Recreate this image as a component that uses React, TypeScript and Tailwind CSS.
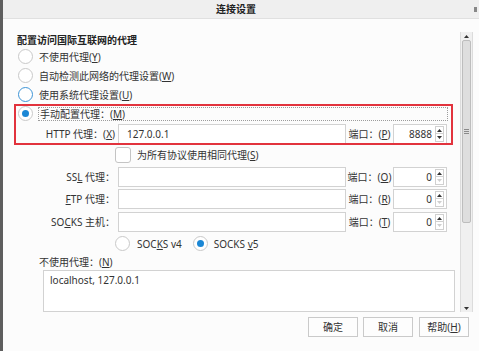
import React from "react";

const FONT = "font-['Noto_Sans','Noto_Sans_CJK_SC',sans-serif]";

function U({ children }: { children: React.ReactNode }) {
  return <span className="underline underline-offset-[1px]">{children}</span>;
}

function Radio({ checked = false, blue = false }: { checked?: boolean; blue?: boolean }) {
  return (
    <span
      className={
        blue
          ? "w-[15px] h-[15px] rounded-full border border-[#3d94d6] bg-white flex items-center justify-center shrink-0"
          : "w-[15px] h-[15px] rounded-full border border-[#c9c9c9] bg-white flex items-center justify-center shrink-0"
      }
    >
      {checked && <span className="w-[7px] h-[7px] rounded-full bg-[#1b87d5]" />}
    </span>
  );
}

function Tri({ up, dark }: { up: boolean; dark: boolean }) {
  return (
    <svg width="5" height="3" viewBox="0 0 5 3">
      <polygon points={up ? "2.5,0 5,3 0,3" : "0,0 5,0 2.5,3"} fill={dark ? "#333" : "#cfcfcf"} />
    </svg>
  );
}

function PortBox({ value, downDark }: { value: string; downDark: boolean }) {
  return (
    <div className="w-[54px] h-[20px] border border-[#d2d2d2] bg-white flex items-center">
      <span className="flex-1 text-right">{value}</span>
      <div className="w-[9px] h-[16px] ml-[3px] mr-[2px] flex flex-col">
        <div className="h-[8px] border border-[#d0d0d0] flex items-center justify-center">
          <Tri up dark />
        </div>
        <div className="h-[8px] border border-t-0 border-[#d0d0d0] flex items-center justify-center">
          <Tri up={false} dark={downDark} />
        </div>
      </div>
    </div>
  );
}

function ProxyRow({
  label,
  value,
  portLabel,
  port,
  downDark,
  mt,
}: {
  label: React.ReactNode;
  value: string;
  portLabel: React.ReactNode;
  port: string;
  downDark: boolean;
  mt: string;
}) {
  return (
    <div className={`flex items-center h-[20px] ${mt}`}>
      <div className="w-[115px] text-right pr-[3px] whitespace-nowrap">{label}</div>
      <div className="w-[228px] h-[20px] border border-[#d2d2d2] bg-white flex items-center pl-[8px]">{value}</div>
      <div className="w-[47px] text-center whitespace-nowrap">{portLabel}</div>
      <PortBox value={port} downDark={downDark} />
    </div>
  );
}

export default function App() {
  return (
    <div className={`w-[479px] h-[351px] flex bg-[#fcfcfc] overflow-hidden relative text-[10px] leading-[12px] text-[#333] ${FONT}`}>
      <div className="w-[3px] bg-[#5e5e5e] shrink-0" />
      <div className="flex-1 flex flex-col">
        {/* title bar */}
        <div className="h-[19px] bg-[#efefef] border-b border-[#e0e0e0] flex items-center justify-center pr-[10px] relative shrink-0">
          <span className="font-bold text-[#222]">连接设置</span>
          <span className="absolute right-[2px] top-[7px] w-[3px] h-[5px] bg-[#888]" />
        </div>

        {/* body */}
        <div className="flex">
          <div className="w-[457px] flex flex-col">
            <div className="mt-[15px] pl-[14px] h-[12px] font-bold text-[#222]">配置访问国际互联网的代理</div>
            <div className="mt-[1px] flex flex-col">
              <div className="h-[19px] flex items-center pl-[15px] gap-[6px]">
                <Radio />
                <span>不使用代理(<U>Y</U>)</span>
              </div>
              <div className="h-[19px] flex items-center pl-[15px] gap-[6px]">
                <Radio />
                <span>自动检测此网络的代理设置(<U>W</U>)</span>
              </div>
              <div className="h-[19px] flex items-center pl-[15px] gap-[6px]">
                <Radio blue />
                <span>使用系统代理设置(<U>U</U>)</span>
              </div>
              <div className="h-[19px] flex items-center pl-[15px]">
                <Radio checked />
                <div className="ml-[5px] w-[410px] h-[14px] border border-dotted border-[#9c9c9c] flex items-center pl-[1px]">
                  手动配置代理：(<U>M</U>)
                </div>
              </div>
            </div>

            <ProxyRow
              mt="mt-[1px]"
              label={<>HTTP 代理：(<U>X</U>)</>}
              value="127.0.0.1"
              portLabel={<>端口：(<U>P</U>)</>}
              port="8888"
              downDark
            />

            <div className="mt-[3px] h-[16px] flex items-center pl-[112px]">
              <span className="w-[16px] h-[16px] rounded-[3px] border border-[#c4c4c4] bg-white shrink-0" />
              <span className="ml-[6px]">为所有协议使用相同代理(<U>S</U>)</span>
            </div>

            <ProxyRow
              mt="mt-[4px]"
              label={<>SS<U>L</U> 代理：</>}
              value=""
              portLabel={<>端口：(<U>O</U>)</>}
              port="0"
              downDark={false}
            />
            <ProxyRow
              mt="mt-[2px]"
              label={<><U>F</U>TP 代理：</>}
              value=""
              portLabel={<>端口：(<U>R</U>)</>}
              port="0"
              downDark={false}
            />
            <ProxyRow
              mt="mt-[3px]"
              label={<>SO<U>C</U>KS 主机：</>}
              value=""
              portLabel={<>端口：(<U>T</U>)</>}
              port="0"
              downDark={false}
            />

            <div className="mt-[4px] h-[15px] flex items-center pl-[112px]">
              <Radio />
              <span className="ml-[7px]">SOC<U>K</U>S v4</span>
              <span className="ml-[11px]"><Radio checked /></span>
              <span className="ml-[6px]">SOCKS <U>v</U>5</span>
            </div>

            <div className="mt-[5px] h-[12px] pl-[36px]">不使用代理：(<U>N</U>)</div>

            <div className="mt-[2px] ml-[40px] w-[412px] h-[42px] border border-[#d2d2d2] bg-white pl-[6px] pt-[3px]">
              localhost, 127.0.0.1
            </div>
          </div>

          {/* scrollbar */}
          <div className="mt-[13px] w-[13px] h-[280px] flex flex-col bg-[#f0f0f0] border-x border-[#dcdcdc]">
            <div className="h-[8px] flex items-center justify-center">
              <Tri up dark />
            </div>
            <div className="h-[183px] mx-[1px] rounded-[2px] border border-[#bdbdbd] bg-[#dedede] flex items-center justify-center">
              <div className="flex flex-col gap-[1px]">
                <span className="w-[5px] h-[1px] bg-[#8a8a8a]" />
                <span className="w-[5px] h-[1px] bg-[#8a8a8a]" />
                <span className="w-[5px] h-[1px] bg-[#8a8a8a]" />
              </div>
            </div>
            <div className="flex-1" />
            <div className="h-[8px] flex items-center justify-center">
              <Tri up={false} dark />
            </div>
          </div>
        </div>

        {/* buttons */}
        <div className="mt-[5px] flex pl-[305px]">
          <div className="w-[50px] h-[20px] border border-[#cacaca] bg-[#fdfdfd] flex items-center justify-center">确定</div>
          <div className="ml-[5px] w-[50px] h-[20px] border border-[#cacaca] bg-[#fdfdfd] flex items-center justify-center">取消</div>
          <div className="ml-[6px] w-[50px] h-[20px] border border-[#cacaca] bg-[#fdfdfd] flex items-center justify-center">
            帮助(<U>H</U>)
          </div>
        </div>
      </div>

      {/* red annotation box */}
      <div className="absolute left-[14px] top-[104px] w-[439px] h-[41px] border-2 border-[#e2333d] pointer-events-none" />
    </div>
  );
}
